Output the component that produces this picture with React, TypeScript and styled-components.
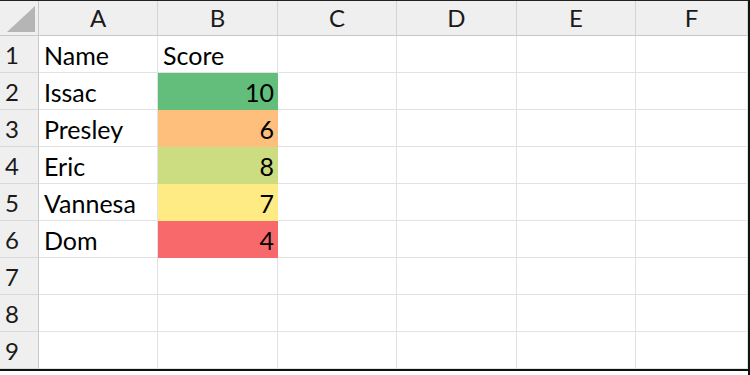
import React from "react";
import styled, { createGlobalStyle } from "styled-components";

const Global = createGlobalStyle`
  html, body { margin: 0; padding: 0; background: #fff; }
  body { font-family: Lato, "Liberation Sans", sans-serif; }
`;

const COLS = ["A", "B", "C", "D", "E", "F"];
const COL_WIDTHS = [119, 120, 119, 120, 119, 112];
const ROWS = 9;

const Frame = styled.div`
  width: 750px;
  height: 375px;
  box-sizing: border-box;
  border-top: 1px solid #222;
  border-right: 2px solid #111;
  overflow: hidden;
  background: #fff;
`;

const Sheet = styled.div`
  display: grid;
  grid-template-columns: 39px ${COL_WIDTHS.map((w) => `${w}px`).join(" ")};
  grid-template-rows: 35px repeat(${ROWS}, 37px);
  border-bottom: 2px solid #111;
  width: max-content;
`;

const Corner = styled.div`
  background: #efefef;
  border-right: 1px solid #c8c8c8;
  border-bottom: 1px solid #c8c8c8;
  display: flex;
  align-items: flex-end;
  justify-content: flex-end;
  padding: 0 3px 3px 0;
`;

const ColHead = styled.div`
  background: #efefef;
  border-right: 1px solid #d4d4d4;
  border-bottom: 1px solid #c8c8c8;
  display: flex;
  align-items: center;
  justify-content: center;
  font-size: 24px;
  color: #1a1a1a;
  padding-bottom: 1px;
`;

const RowHead = styled.div`
  background: #efefef;
  border-right: 1px solid #c8c8c8;
  border-bottom: 1px solid #d8d8d8;
  display: flex;
  align-items: center;
  padding-left: 5px;
  font-size: 24px;
  color: #1a1a1a;
`;

const Cell = styled.div<{ $fill?: string; $num?: boolean }>`
  background: ${(p) => p.$fill ?? "#fff"};
  border-right: 1px solid ${(p) => (p.$fill ? p.$fill : "#e2e2e2")};
  border-bottom: 1px solid ${(p) => (p.$fill ? p.$fill : "#e2e2e2")};
  display: flex;
  align-items: center;
  justify-content: ${(p) => (p.$num ? "flex-end" : "flex-start")};
  padding: 1px ${(p) => (p.$num ? "3px" : "0")} 0 ${(p) => (p.$num ? "0" : "5px")};
  font-size: 25px;
  color: #000;
  white-space: nowrap;
`;

type Row = { name?: string; score?: string; fill?: string; num?: boolean };

const data: Row[] = [
  { name: "Name", score: "Score" },
  { name: "Issac", score: "10", fill: "#63be7b", num: true },
  { name: "Presley", score: "6", fill: "#fdbf7b", num: true },
  { name: "Eric", score: "8", fill: "#cbdc81", num: true },
  { name: "Vannesa", score: "7", fill: "#ffeb84", num: true },
  { name: "Dom", score: "4", fill: "#f8696b", num: true },
  {},
  {},
  {},
];

export default function App() {
  return (
    <>
      <Global />
      <Frame>
        <Sheet>
          <Corner>
            <svg width="28" height="26" viewBox="0 0 28 26">
              <polygon points="0,26 28,26 28,0" fill="#b5b5b5" />
            </svg>
          </Corner>
          {COLS.map((c) => (
            <ColHead key={c}>{c}</ColHead>
          ))}
          {data.map((r, i) => (
            <React.Fragment key={i}>
              <RowHead>{i + 1}</RowHead>
              <Cell>{r.name}</Cell>
              <Cell $fill={r.fill} $num={r.num}>
                {r.score}
              </Cell>
              <Cell />
              <Cell />
              <Cell />
              <Cell />
            </React.Fragment>
          ))}
        </Sheet>
      </Frame>
    </>
  );
}
